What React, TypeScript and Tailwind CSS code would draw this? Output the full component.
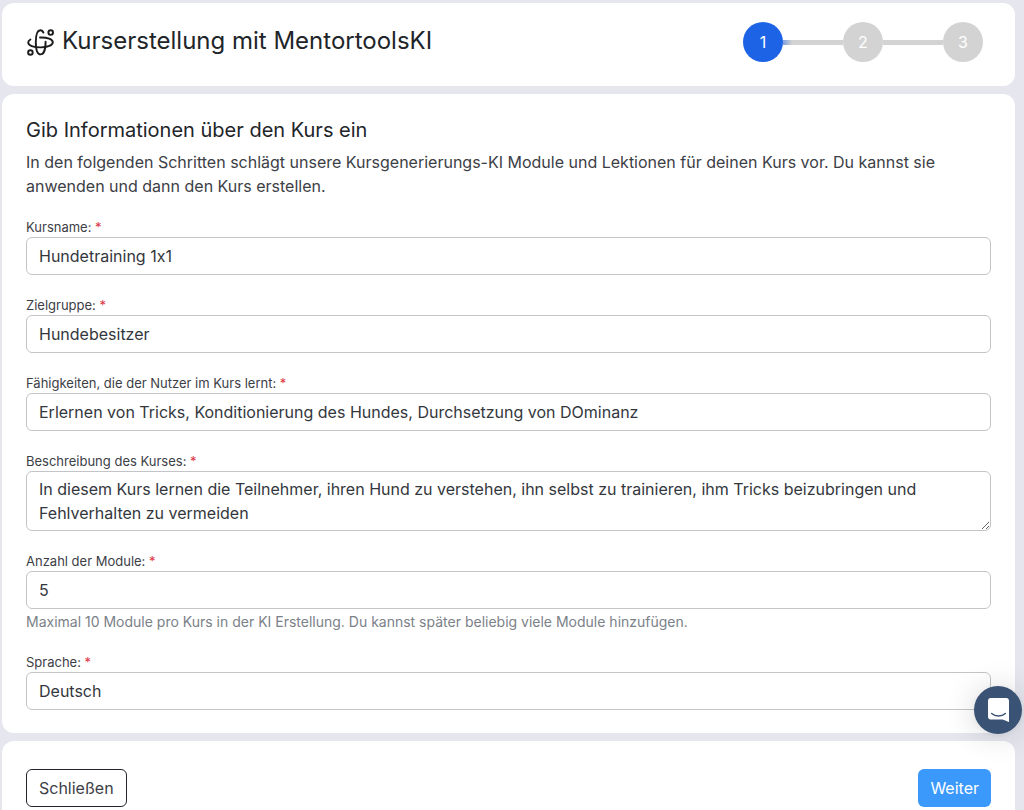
import React, { useState } from 'react';

interface CourseForm {
  name: string;
  audience: string;
  skills: string;
  description: string;
  modules: string;
  language: string;
}

const inputClass =
  'block w-full h-[38px] rounded-md border border-[#c3c4c8] bg-white px-3 text-base text-[#33373d] outline-none focus:border-[#3b99fc]';

function OrbitIcon() {
  return (
    <svg
      viewBox="0 0 28 30"
      className="w-7 h-[30px] shrink-0"
      fill="none"
      stroke="#1b1b1b"
      strokeWidth="1.9"
      strokeLinecap="round"
      aria-hidden="true"
    >
      <circle cx="24.7" cy="6.6" r="2.3" />
      <circle cx="4.4" cy="26.5" r="2.3" />
      <path d="M17.4 6.6C16.8 5 15.800 4.200 14.400 4.200C11.500 4.200 9.800 9.200 9.800 16C9.800 23.400 11.500 28.400 14.600 28.400C17.700 28.400 19.600 23 19.600 15.800" />
      <path d="M4.400 13.500C2.900 14.300 2.200 15.300 2.200 16.400C2.200 19.400 7.400 21.400 14.600 21.400C21.800 21.400 26.800 19.200 26.800 16.200C26.800 13.100 21.400 11.300 14 11.500" />
    </svg>
  );
}

function Steps({ current }: { current: number }) {
  return (
    <ol className="flex items-center pr-2 text-base text-white">
      {[1, 2, 3].map((step) => (
        <li key={step} className="flex items-center">
          {step > 1 && (
            <span
              className={
                step === current + 1
                  ? 'w-15 h-[5px] bg-linear-to-r from-[#7f9ede] to-[#d3d3d3] to-15%'
                  : 'w-15 h-[5px] bg-[#d3d3d3]'
              }
            />
          )}
          <span
            className={
              step <= current
                ? 'flex items-center justify-center w-10 h-10 rounded-full bg-[#1d63e6]'
                : 'flex items-center justify-center w-10 h-10 rounded-full bg-[#d3d3d3]'
            }
          >
            {step}
          </span>
        </li>
      ))}
    </ol>
  );
}

interface FieldProps {
  id: string;
  label: string;
  hint?: string;
  children: React.ReactNode;
}

function Field({ id, label, hint, children }: FieldProps) {
  return (
    <div>
      <label htmlFor={id} className="block text-[13px] leading-5 text-[#3c4046]">
        {label} <span className="text-[#dc3545]">*</span>
      </label>
      {children}
      {hint && <p className="mt-[3px] text-[14px] leading-5 text-[#7b8188]">{hint}</p>}
    </div>
  );
}

export default function App() {
  const [form, setForm] = useState<CourseForm>({
    name: 'Hundetraining 1x1',
    audience: 'Hundebesitzer',
    skills: 'Erlernen von Tricks, Konditionierung des Hundes, Durchsetzung von DOminanz',
    description:
      'In diesem Kurs lernen die Teilnehmer, ihren Hund zu verstehen, ihn selbst zu trainieren, ihm Tricks beizubringen und Fehlverhalten zu vermeiden',
    modules: '5',
    language: 'Deutsch',
  });

  const update = (key: keyof CourseForm) => (
    e: React.ChangeEvent<HTMLInputElement | HTMLTextAreaElement | HTMLSelectElement>
  ) => setForm((prev) => ({ ...prev, [key]: e.target.value }));

  return (
    <div className="min-h-screen bg-[#e6e6ef] pt-[3px] pl-[2px] pr-[9px] font-['Inter',sans-serif] text-[#212529] [font-feature-settings:'calt'_0]">
      <div className="flex flex-col gap-2">
        <header className="flex items-start justify-between rounded-xl bg-white px-6 pt-[19px] pb-6">
          <div className="flex items-center gap-2 pt-[3px]">
            <OrbitIcon />
            <h1 className="text-2xl leading-8">Kurserstellung mit MentortoolsKI</h1>
          </div>
          <Steps current={1} />
        </header>

        <main className="rounded-xl bg-white px-6 pt-6 pb-[23px]">
          <h2 className="text-xl leading-6">Gib Informationen über den Kurs ein</h2>
          <p className="mt-2 text-base leading-6 text-[#3c4046]">
            In den folgenden Schritten schlägt unsere Kursgenerierungs-KI Module und Lektionen für deinen
            Kurs vor. Du kannst sie anwenden und dann den Kurs erstellen.
          </p>

          <form id="course-form" className="mt-[19px] flex flex-col gap-5" onSubmit={(e) => e.preventDefault()}>
            <Field id="name" label="Kursname:">
              <input id="name" className={inputClass} value={form.name} onChange={update('name')} />
            </Field>
            <Field id="audience" label="Zielgruppe:">
              <input id="audience" className={inputClass} value={form.audience} onChange={update('audience')} />
            </Field>
            <Field id="skills" label="Fähigkeiten, die der Nutzer im Kurs lernt:">
              <input id="skills" className={inputClass} value={form.skills} onChange={update('skills')} />
            </Field>
            <Field id="description" label="Beschreibung des Kurses:">
              <textarea
                id="description"
                rows={2}
                className="block w-full resize-y rounded-md border border-[#c3c4c8] bg-white px-3 py-[5px] text-base leading-6 text-[#33373d] outline-none focus:border-[#3b99fc]"
                value={form.description}
                onChange={update('description')}
              />
            </Field>
            <Field
              id="modules"
              label="Anzahl der Module:"
              hint="Maximal 10 Module pro Kurs in der KI Erstellung. Du kannst später beliebig viele Module hinzufügen."
            >
              <input id="modules" className={inputClass} value={form.modules} onChange={update('modules')} />
            </Field>
            <Field id="language" label="Sprache:">
              <select
                id="language"
                className={`${inputClass} appearance-none`}
                value={form.language}
                onChange={update('language')}
              >
                <option>Deutsch</option>
              </select>
            </Field>
          </form>
        </main>

        <footer className="flex items-center justify-between rounded-t-xl bg-white px-6 pt-7 pb-1">
          <button
            type="button"
            className="h-[38px] rounded-md border border-[#212529] px-3 text-base text-[#3c4046]"
          >
            Schließen
          </button>
          <button
            type="submit"
            form="course-form"
            className="h-[38px] rounded-md bg-[#3b99fc] px-3 text-base text-white"
          >
            Weiter
          </button>
        </footer>
      </div>

      <button
        type="button"
        aria-label="Chat"
        className="fixed right-[2px] bottom-[76px] flex h-12 w-12 items-center justify-center rounded-full bg-[#3a5374] shadow-[0_2px_32px_rgba(0,0,0,0.16),0_1px_6px_rgba(0,0,0,0.06)]"
      >
        <svg viewBox="0 0 28 32" className="h-6 w-[21px]" aria-hidden="true">
          <path
            fill="#fff"
            d="M28 32s-4.714-1.855-8.527-3.34H3.437C1.54 28.66 0 27.026 0 25.013V3.644C0 1.633 1.54 0 3.437 0h21.125c1.898 0 3.437 1.632 3.437 3.645v18.404H28V32z"
          />
          <path
            fill="none"
            stroke="#3a5374"
            strokeWidth="2"
            strokeLinecap="round"
            d="M4.9 20.6c2.400 2.200 5.700 3.300 9.100 3.300s6.700-1.100 9.100-3.300"
          />
        </svg>
      </button>
    </div>
  );
}
